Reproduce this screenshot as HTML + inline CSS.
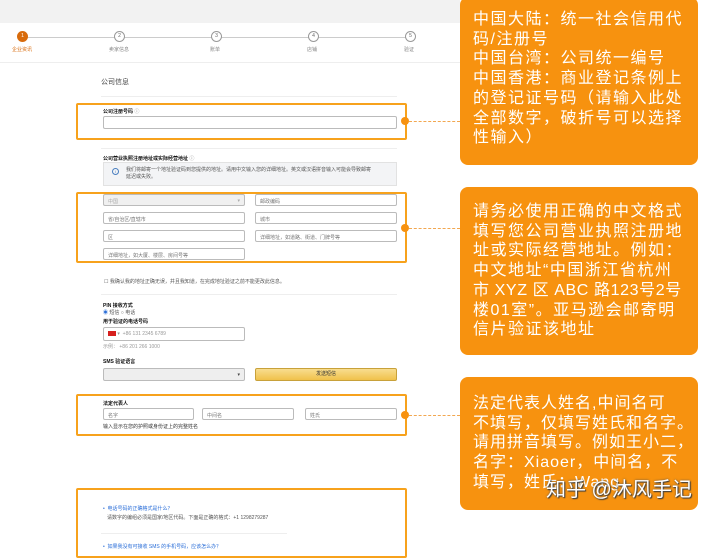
<!DOCTYPE html>
<html><head><meta charset="utf-8"><style>
*{margin:0;padding:0;box-sizing:border-box}
body{width:720px;height:549px;overflow:hidden;background:#fff;font-family:"Liberation Sans","Noto Sans CJK SC",sans-serif;position:relative;color:#333}
.a{position:absolute}
.t{font-size:5px;color:#555;white-space:nowrap}
.b{font-size:5px;color:#111;font-weight:bold;white-space:nowrap}
.in{position:absolute;border:1px solid #bbb;border-radius:2px;background:#fff;height:12px;font-size:5px;color:#777;padding:3px 4px;white-space:nowrap}
.hl{position:absolute;border:2.5px solid #f7a21c;border-radius:2px}
.dot{position:absolute;width:8px;height:8px;border-radius:50%;background:#f7920f}
.dash{position:absolute;border-top:1.5px dashed #f2a750;height:0}
.ob{position:absolute;left:460px;width:238px;background:#f7920f;border-radius:8px;color:#fff;font-size:16px;line-height:19.7px;padding:9px 0 0 13px;letter-spacing:1.5px;white-space:nowrap;overflow:hidden}
.st{position:absolute;top:31px;width:11px;height:11px;border-radius:50%;border:1px solid #999;background:#fff;font-size:5px;color:#666;text-align:center;line-height:9px}
.sl{position:absolute;top:46px;font-size:5px;color:#888;white-space:nowrap}
</style></head><body>
<div class="a" style="left:0;top:0;width:460px;height:23px;background:#f2f2f2"></div>
<div class="a" style="left:22px;top:37px;width:390px;height:1px;background:#ccc"></div>
<div class="st" style="left:17px;background:#d86b0c;border-color:#d86b0c;color:#fff">1</div>
<div class="st" style="left:114px">2</div>
<div class="st" style="left:211px">3</div>
<div class="st" style="left:308px">4</div>
<div class="st" style="left:405px">5</div>
<div class="sl" style="left:12px;color:#d86b0c">企业资讯</div>
<div class="sl" style="left:109px">卖家信息</div>
<div class="sl" style="left:210px">账单</div>
<div class="sl" style="left:307px">店铺</div>
<div class="sl" style="left:404px">验证</div>
<div class="a" style="left:0;top:62px;width:460px;height:1px;background:#eee"></div>
<div class="a" style="left:101px;top:77px;font-size:7px;color:#444">公司信息</div>
<div class="a" style="left:101px;top:96px;width:296px;height:1px;background:#eee"></div>
<div class="b a" style="left:103px;top:108px">公司注册号码 <span style="color:#aaa">ⓘ</span></div>
<div class="in" style="left:103px;top:116px;width:294px;height:13px"></div>
<div class="a" style="left:101px;top:148px;width:296px;height:1px;background:#eee"></div>
<div class="b a" style="left:103px;top:155px">公司营业执照注册地址或实际经营地址 <span style="color:#aaa">ⓘ</span></div>
<div class="a" style="left:103px;top:162px;width:294px;height:24px;background:#f3f4f6;border:1px solid #e2e2e2"></div>
<div class="a" style="left:112px;top:168px;width:7px;height:7px;border:1px solid #4a7fc0;border-radius:50%;font-size:4px;color:#4a7fc0;text-align:center;line-height:5px">i</div>
<div class="t a" style="left:126px;top:167px;line-height:7px">我们将邮寄一个地址验证码到您提供的地址。请用中文输入您的详细地址。英文或汉语拼音输入可能会导致邮寄<br>延迟或失败。</div>
<div class="in" style="left:103px;top:194px;width:142px;background:#f0f0f0;color:#aaa">中国<span style="float:right">▾</span></div>
<div class="in" style="left:255px;top:194px;width:142px">邮政编码</div>
<div class="in" style="left:103px;top:212px;width:142px">省/自治区/直辖市</div>
<div class="in" style="left:255px;top:212px;width:142px">城市</div>
<div class="in" style="left:103px;top:230px;width:142px">区</div>
<div class="in" style="left:255px;top:230px;width:142px">详细地址，如道路、街道、门牌号等</div>
<div class="in" style="left:103px;top:248px;width:142px">详细地址，如大厦、楼层、房间号等</div>
<div class="t a" style="left:104px;top:278px">☐ 我确认我的地址正确无误，并且我知道，在完成地址验证之前不能更改此信息。</div>
<div class="a" style="left:101px;top:294px;width:296px;height:1px;background:#eee"></div>
<div class="b a" style="left:103px;top:302px">PIN 接收方式</div>
<div class="t a" style="left:103px;top:309px"><span style="color:#2a6ed8">◉</span> 短信 ○ 电话</div>
<div class="b a" style="left:103px;top:318px">用于验证的电话号码</div>
<div class="in" style="left:103px;top:327px;width:142px;height:14px;color:#999"><span style="display:inline-block;width:8px;height:5px;background:#d6201e;vertical-align:middle"></span> ▾ &nbsp;+86 131 2345 6789</div>
<div class="t a" style="left:103px;top:343px;color:#999">示例： +86 201 266 1000</div>
<div class="b a" style="left:103px;top:358px">SMS 验证语言</div>
<div class="in" style="left:103px;top:368px;width:142px;height:13px;background:#eee;color:#444"><span style="float:right">▾</span></div>
<div class="a" style="left:255px;top:368px;width:142px;height:13px;background:linear-gradient(#f8dd8f,#f0c14b);border:1px solid #c8a13a;border-radius:2px;font-size:5px;text-align:center;line-height:11px;color:#333">发送短信</div>
<div class="b a" style="left:103px;top:400px">法定代表人</div>
<div class="in" style="left:103px;top:408px;width:91px">名字</div>
<div class="in" style="left:202px;top:408px;width:92px">中间名</div>
<div class="in" style="left:305px;top:408px;width:92px">姓氏</div>
<div class="t a" style="left:103px;top:423px;color:#333">输入显示在您的护照或身份证上的完整姓名</div>
<div class="t a" style="left:103px;top:505px;color:#2a6ed8">•&nbsp; 电话号码的正确格式是什么？</div>
<div class="t a" style="left:107px;top:514px">请数字的编组必须是国家/地区代码。下面是正确的格式：+1 1298279287</div>
<div class="a" style="left:101px;top:533px;width:186px;height:1px;background:#eee"></div>
<div class="t a" style="left:103px;top:543px;color:#2a6ed8">•&nbsp; 如果我没有可接收 SMS 的手机号码，应该怎么办？</div>

<div class="hl" style="left:76px;top:103px;width:331px;height:37px"></div>
<div class="hl" style="left:76px;top:192px;width:331px;height:71px"></div>
<div class="hl" style="left:76px;top:394px;width:331px;height:42px"></div>
<div class="hl" style="left:76px;top:488px;width:331px;height:70px"></div>
<div class="dot" style="left:401px;top:117px"></div>
<div class="dot" style="left:401px;top:224px"></div>
<div class="dot" style="left:401px;top:411px"></div>
<div class="dash" style="left:409px;top:121px;width:51px"></div>
<div class="dash" style="left:409px;top:228px;width:51px"></div>
<div class="dash" style="left:409px;top:415px;width:51px"></div>

<div class="ob" style="top:-3px;height:168px;padding-top:13px">中国大陆：统一社会信用代<br>码/注册号<br>中国台湾：公司统一编号<br>中国香港：商业登记条例上<br>的登记证号码（请输入此处<br>全部数字，破折号可以选择<br>性输入）</div>
<div class="ob" style="top:187px;height:168px;padding-top:15px">请务必使用正确的中文格式<br>填写您公司营业执照注册地<br>址或实际经营地址。例如：<br>中文地址“中国浙江省杭州<br><span style="letter-spacing:0.6px">市 XYZ 区 ABC 路123号2号</span><br>楼01室”。亚马逊会邮寄明<br>信片验证该地址</div>
<div class="ob" style="top:377px;height:133px;padding-top:17px;letter-spacing:1px">法定代表人姓名,中间名可<br>不填写，仅填写姓氏和名字。<br>请用拼音填写。例如王小二，<br>名字：Xiaoer，中间名，不<br>填写，姓氏：Wang</div>
<div class="a" style="left:546px;top:473px;font-size:20px;color:#fff;text-shadow:0 0 2px #555,1px 1px 1px #333;white-space:nowrap">知乎 @沐风手记</div>
</body></html>
